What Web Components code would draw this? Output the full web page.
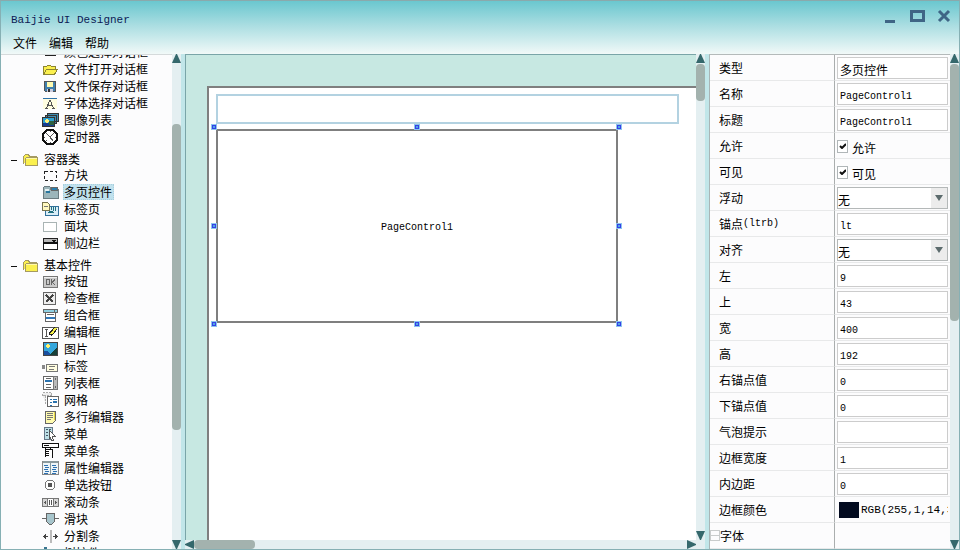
<!DOCTYPE html>
<html lang="zh-CN">
<head>
<meta charset="utf-8">
<title>Baijie UI Designer</title>
<style>
  html, body { height: 100%; margin: 0; }
  body { overflow: hidden; }
</style>
</head>
<body>
<designer-window></designer-window>
<script>
const BASE = `
  * { box-sizing: border-box; }
  button, input, select { font: inherit; color: inherit; margin: 0; border-radius: 0; }
  button { padding: 0; border: 0; background: none; }
`;

function define(name, html, setup) {
  const template = document.createElement('template');
  template.innerHTML = `<style>${BASE}</style>${html}`;
  customElements.define(name, class extends HTMLElement {
    connectedCallback() {
      if (this.shadowRoot) return;
      const root = this.attachShadow({ mode: 'open' });
      root.appendChild(template.content.cloneNode(true));
      if (setup) setup(this, root);
    }
  });
}

/* Toolbox icons, drawn on a 17 x 16 grid. */
const ICONS = {
  folder: '<path fill="#fbf04e" stroke="#a59a62" d="M1.500 12.500v-7l2-2h3l1 2h7v2M4.500 6.500h11v8h-12v-6z"/><path fill="#fff9a8" d="M4 7h11v1H4z"/>',
  color: '<path fill="#555" d="M3 3h11v9H3z"/><path fill="#e8d83c" d="M4 8h3v3H4z"/><path fill="#6ca6c8" d="M8 4h5v4H8z"/><path fill="#222" d="M3 11h11v1H3z"/>',
  open: '<path fill="#fbf04e" stroke="#8b8433" d="M1.500 13.500v-8h3l1-1h3l1 1h4v3M1.500 13.500l3-5h11l-3 5z"/>',
  save: '<path fill="#3f7fae" stroke="#555" d="M2.500 3.500h11v10h-10l-1-1z"/><path fill="#fffbb0" d="M5 4h6v5H5z"/><path fill="#ccd" d="M5 11h6v3H5z"/><path fill="#333" d="M6 11h2v3H6z"/>',
  font: '<path fill="#fffde0" d="M1 3h14v11H1z"/><path fill="#2e72a8" d="M1 3h14v1H1z"/><path fill="none" stroke="#555" d="M3 13.500h3M10 13.500h3M4.500 13L8 5l3.500 8M5.500 10.500h5"/>',
  images: '<path fill="#3f8cb0" stroke="#333" d="M5.500 1.500h11v8h-11zM3.500 3.500h11v8h-11z"/><path fill="#2fa0d0" stroke="#333" d="M.5 5.500h12v9H.5z"/><path fill="#163c90" d="M1 11h11v3H1z"/><path fill="#2b6040" d="M7 9h5v4H7z"/><path fill="#fff27a" d="M4 7h2v4H4zM3 8h4v2H3z"/>',
  timer: '<path fill="#fff" stroke="#111" stroke-width="1.500" d="M5 1h6l4 4v6l-4 4H5l-4-4V5z"/><path fill="none" stroke="#555" d="M4 4l4 4 4-4M8 8l3 4M8 2v1M2 8h1M13 8h1M8 13v1M4 12l1-1"/>',
  frame: '<path fill="none" stroke="#222" stroke-dasharray="3 2" d="M2.500 4.500h12v9h-12z"/>',
  pages: '<path fill="#9cb5ba" stroke="#6b7b80" d="M1.500 14.500v-11l1-1h5l1 1v2h8v9z"/><path fill="#287eae" stroke="#666" d="M9.500 3.500h6v3h-6z"/><path fill="#e5f0f2" d="M3 5h4v2H3z"/><path fill="#27759e" d="M4 7h4v2H4z"/>',
  tabsheet: '<path fill="#d9edf7" stroke="#32719b" d="M3.500 5.500h13v9h-13z"/><path fill="#207080" d="M5 12l2-2h3l2 2zM9 6h1v3H9zM11 6h1v4h-1zM13 6h1v4h-1z"/><path fill="#fff8be" stroke="#77734e" d="M.5 1.500h5l2 2v6h-7z"/><path fill="#777" d="M2 5h4v1H2z"/>',
  panel: '<path fill="#fff" stroke="#a9b4b4" d="M1.500 4.500h13v9h-13z"/>',
  sidebar: '<path fill="#fff" stroke="#222" d="M1.500 3.500h14v11h-14z"/><path fill="#b7b7b7" d="M2 4h13v3H2z"/><path fill="#111" d="M1 7h15v2H1zM10 5h4v1h-4zM11 6h2v1h-2z"/>',
  button: '<path fill="#c9c9c9" stroke="#777" d="M1.500 3.500h14v11h-14z"/><path fill="#eee" d="M2 4h13v1H2z"/><path fill="none" stroke="#666" d="M4.500 6.500h3v5h-3zM9.500 6v6M13 6.500L10 9.500l3 2"/>',
  checkbox: '<path fill="#eee" stroke="#666" d="M1.500 2.500h12v12h-12z"/><path fill="none" stroke="#444" stroke-width="2" d="M4 5l7 7M11 5l-7 7"/>',
  combo: '<path fill="#8fd0e2" stroke="#666" d="M1.500 2.500h14v3h-14z"/><path fill="#fff" stroke="#666" d="M3.500 5.500h10v9h-10z"/><path fill="#666" d="M12 3h1v3h-1zM5 7h7v1H5z"/><path fill="#3278b8" d="M4 10h9v2H4z"/>',
  edit: '<path fill="#fff" stroke="#555" d="M.5 3.500h16v11H.5z"/><path fill="none" stroke="#555" d="M3 5.500h3M3 12.500h3M4.500 6v6"/><path fill="none" stroke="#222" stroke-width="4" d="M8 11l6-7"/><path fill="none" stroke="#f4ef45" stroke-width="2" d="M9 10l5-6"/>',
  picture: '<path fill="#35a7dd" stroke="#444" d="M1.500 1.500h14v13h-14z"/><path fill="#1950a0" d="M2 10h4l3 4H2z"/><path fill="#164039" d="M15 6v8H7z"/><path fill="#fff36e" d="M5 3h2v4H5zM4 4h4v2H4z"/>',
  label: '<path fill="#fffde0" stroke="#777" d="M4.500 6.500h11v7h-11z"/><path fill="#777" d="M7 8h6v1H7zM7 11h5v1H7z"/><path fill="none" stroke="#888" d="M.5 7v4M1 7l2 4M3 7l-2 4"/>',
  list: '<path fill="#fff" stroke="#666" d="M1.500 1.500h10v13h-10z"/><path fill="#bbb" stroke="#777" d="M11.500 1.500h4v13h-4z"/><path fill="#666" d="M13 3h1v2h-1zM13 11h1v2h-1zM4 3h5v1H4zM4 9h5v1H4zM4 12h5v1H4z"/><path fill="#2b72ae" d="M3 5h7v2H3z"/>',
  grid: '<path fill="#eee" stroke="#aaa" stroke-dasharray="2 1" d="M.5.500h9v3H.5zM.5 3.500h3v8"/><path fill="#fff" stroke="#666" d="M5.500 4.500h11v10h-11z"/><path fill="#2b72ae" d="M8 7h2v1H8zM11 7h4v1h-4zM8 10h2v1H8zM11 9h4v2h-4zM8 13h2v1H8z"/>',
  memo: '<path fill="#fffbb0" stroke="#666" d="M3.500 2.500h10v9l-3 3h-7z"/><path fill="#777" d="M5 4h6v1H5zM5 6h6v1H5zM5 8h6v1H5zM5 10h4v1H5z"/><path fill="#e5d646" d="M12 3h1v8h-1z"/>',
  menu: '<path fill="#bde0e6" stroke="#678" d="M2.500 1.500h8v12h-8z"/><path fill="#456" d="M4 3h2v1H4zM4 6h2v1H4zM4 9h2v1H4zM7 3h2v1H7z"/><path fill="#fff" stroke="#555" d="M7.500 4.500l6 6h-3l1 4h-2l-1-3-1 1z"/>',
  menubar: '<path fill="#fff" stroke="#111" d="M.5.500h16v4H.5zM3.500 4.500v9M3.500 6.500h7v8"/><path fill="#111" d="M2 2h5v1H2zM4 8h3v1H4zM4 10h3v1H4zM4 12h3v1H4zM8 5h1v2H8z"/>',
  props: '<path fill="#eef5f8" stroke="#888" d="M.5 1.500h16v13H.5z"/><path fill="#8a999d" d="M1 1h15v2H1zM8 3h1v11H8z"/><path fill="#2d70b0" d="M2 5h4v1H2zM3 7h4v1H3zM2 9h4v1H2zM3 11h4v1H3zM2 13h4v1H2zM10 5h4v1h-4zM11 7h4v1h-4zM10 9h4v1h-4zM11 11h4v1h-4zM10 13h4v1h-4z"/>',
  radio: '<circle cx="8" cy="8" r="5" fill="#fff" stroke="#777"/><path fill="#555" d="M6 6h4v4H6z"/>',
  scroll: '<path fill="#d5d5d5" stroke="#777" d="M.5 4.500h16v8H.5z"/><path fill="#fff" stroke="#777" d="M5.500 4.500h6v8h-6z"/><path fill="#555" d="M2 8h1v1H2zM3 7h1v3H3zM14 8h1v1h-1zM13 7h1v3h-1zM7 6h1v5H7zM9 6h1v5H9z"/>',
  slider: '<path fill="#666" d="M0 7h17v1H0z"/><path fill="#a7c5cc" stroke="#666" d="M4.500 2.500h8v8l-3 3h-2l-3-3z"/>',
  splitter: '<path fill="#bbb" d="M8 2h2v13H8z"/><path fill="#444" d="M1 8h5v1H1zM3 6h1v5H3zM2 7h1v3H2zM11 8h5v1h-5zM13 6h1v5h-1zM14 7h1v3h-1z"/>',
  tree: '<path fill="#39748f" d="M2 2h3v3H2z"/><path fill="#666" d="M3 5h1v8H3zM3 8h5v1H3z"/>'
};

const iconSvg = name =>
  `<svg width="17" height="16" viewBox="0 0 17 16" shape-rendering="crispEdges" aria-hidden="true">${ICONS[name] || ''}</svg>`;

define('scroll-bar', `
  <style>
    :host { display: flex; flex-direction: column; background: #e4eff1; min-width: 9px; min-height: 9px; }
    :host([horizontal]) { flex-direction: row; }
    button { flex: none; width: 9px; height: 9px; display: block; }
    svg { display: block; fill: #35686c; }
    .thumb { background: #a3b2ae; border-radius: 4px; }
    :host([horizontal]) svg { transform: rotate(-90deg); }
  </style>
  <button aria-label="向前滚动"><svg width="9" height="9" viewBox="0 0 9 9"><path d="M4 0h1l4 9H0z"/></svg></button>
  <div class="before"></div><div class="thumb"></div><div class="after"></div>
  <button aria-label="向后滚动"><svg width="9" height="9" viewBox="0 0 9 9"><path d="M0 0h9L5 9H4z"/></svg></button>
`, (el, root) => {
  const parts = el.getAttribute('parts').split(' ');
  ['.before', '.thumb', '.after'].forEach((s, i) => {
    root.querySelector(s).style.flex = parts[i] + ' 1 0';
  });
});

define('window-bar', `
  <style>
    :host { display: block; height: 53px; background: linear-gradient(#6ac7cf, #a9dde1 45%, #f1f9f8); }
    .top { display: flex; height: 30px; align-items: center; padding: 0 7px 0 10px; }
    h1 { flex: 1; margin: 0; padding-top: 7px; font: 11px/16px "Liberation Mono", monospace; color: #0d1a55; }
    .controls { display: flex; gap: 11px; }
    .controls svg { display: block; fill: none; stroke: #3f6585; }
    nav { display: flex; gap: 12px; height: 23px; align-items: center; padding-left: 12px; }
    nav button { line-height: 18px; }
  </style>
  <div class="top">
    <h1>Baijie UI Designer</h1>
    <div class="controls">
      <button aria-label="最小化"><svg width="16" height="16"><path stroke-width="3" d="M3 13.500h10"/></svg></button>
      <button aria-label="最大化"><svg width="16" height="16"><path stroke-width="3" d="M2.500 3.500h12v9h-12z"/></svg></button>
      <button aria-label="关闭"><svg width="16" height="16"><path stroke-width="3" d="M3 3l10 10M13 3L3 13"/></svg></button>
    </div>
  </div>
  <nav><button>文件</button><button>编辑</button><button>帮助</button></nav>
`);

define('tool-item', `
  <style>
    :host { display: block; height: 17px; padding-left: 41px; }
    button { display: flex; gap: 4px; align-items: center; }
    svg { display: block; }
    span { padding: 0 2px 0 1px; line-height: 16px; height: 16px; white-space: nowrap; }
    :host([selected]) span { background: #c0e1ed; outline: 1px dotted #a9cfdd; outline-offset: -1px; }
  </style>
  <button><i></i><span><slot></slot></span></button>
`, (el, root) => {
  root.querySelector('i').innerHTML = iconSvg(el.getAttribute('icon'));
});

define('tool-group', `
  <style>
    :host { display: block; }
    header { display: flex; height: 17px; align-items: center; padding-left: 10px; margin-top: 4px; }
    header button { width: 6px; height: 12px; margin-right: 5px; display: flex; align-items: center; padding-top: 3px; }
    header button::before { content: ""; flex: 1; height: 1px; background: #111; }
    svg { display: block; }
    span { padding-left: 5px; line-height: 16px; }
  </style>
  <header><button aria-label="折叠" aria-expanded="true"></button><i></i><span></span></header>
  <slot></slot>
`, (el, root) => {
  root.querySelector('i').innerHTML = iconSvg('folder');
  root.querySelector('span').textContent = el.getAttribute('label');
});

define('tool-box', `
  <style>
    :host { display: block; overflow: hidden; background: #fcfcfd; border-top: 1px solid #d5dadb; }
    .list { margin-top: -11px; }
  </style>
  <div class="list">
    <tool-item icon="color">颜色选择对话框</tool-item>
    <tool-item icon="open">文件打开对话框</tool-item>
    <tool-item icon="save">文件保存对话框</tool-item>
    <tool-item icon="font">字体选择对话框</tool-item>
    <tool-item icon="images">图像列表</tool-item>
    <tool-item icon="timer">定时器</tool-item>
    <tool-group label="容器类">
      <tool-item icon="frame">方块</tool-item>
      <tool-item icon="pages" selected>多页控件</tool-item>
      <tool-item icon="tabsheet">标签页</tool-item>
      <tool-item icon="panel">面块</tool-item>
      <tool-item icon="sidebar">侧边栏</tool-item>
    </tool-group>
    <tool-group label="基本控件">
      <tool-item icon="button">按钮</tool-item>
      <tool-item icon="checkbox">检查框</tool-item>
      <tool-item icon="combo">组合框</tool-item>
      <tool-item icon="edit">编辑框</tool-item>
      <tool-item icon="picture">图片</tool-item>
      <tool-item icon="label">标签</tool-item>
      <tool-item icon="list">列表框</tool-item>
      <tool-item icon="grid">网格</tool-item>
      <tool-item icon="memo">多行编辑器</tool-item>
      <tool-item icon="menu">菜单</tool-item>
      <tool-item icon="menubar">菜单条</tool-item>
      <tool-item icon="props">属性编辑器</tool-item>
      <tool-item icon="radio">单选按钮</tool-item>
      <tool-item icon="scroll">滚动条</tool-item>
      <tool-item icon="slider">滑块</tool-item>
      <tool-item icon="splitter">分割条</tool-item>
      <tool-item icon="tree">树控件</tool-item>
    </tool-group>
  </div>
`);

define('selected-control', `
  <style>
    :host { display: flex; align-items: center; justify-content: center; box-sizing: border-box; padding-top: 4px;
      border: 2px solid #7f7f7f; font: 10px/14px "Liberation Mono", monospace; }
    i { position: absolute; width: 6px; height: 6px; background: #4fa9e0; border: 1px solid #8cc4ee;
      box-shadow: inset 0 0 0 1px #3640e8; }
    .t { top: -7px; } .b { bottom: -6px; } .l { left: -7px; } .r { right: -6px; }
    .m { top: calc(50% - 3px); } .c { left: calc(50% - 3px); }
  </style>
  <slot></slot>
  <i class="t l"></i><i class="t c"></i><i class="t r"></i>
  <i class="m l"></i><i class="m r"></i>
  <i class="b l"></i><i class="b c"></i><i class="b r"></i>
`);

define('design-canvas', `
  <style>
    :host { display: flex; overflow: hidden; padding: 31px 0 0 21px; background: #c7e8e2;
      border: solid #7aa5a8; border-width: 1px 0 0 1px; }
    .sheet { flex: 1; position: relative; background: #fff; border: solid #7f7f7f; border-width: 2px 0 0 2px; }
    input { position: absolute; left: 7px; top: 6px; width: 463px; height: 30px; border: 2px solid #b3d2e1; background: #fff; outline: 0; }
    selected-control { position: absolute; left: 7px; top: 41px; width: 402px; height: 194px; }
  </style>
  <div class="sheet">
    <input aria-label="编辑框">
    <selected-control>PageControl1</selected-control>
  </div>
`);

define('prop-row', `
  <style>
    :host { display: grid; grid-template-columns: 125px minmax(0, 1fr); height: 26px; }
    .name { display: flex; align-items: center; padding-left: 9px; border-right: 1px solid #aaaeae; border-bottom: 1px solid #e8e9ea; white-space: nowrap; }
    .name small, .latin { font: 10px/14px "Liberation Mono", monospace; }
    .expander { width: 10px; height: 11px; margin-left: -9px; border: 1px solid #c9cccc;
      background: linear-gradient(#c9cccc, #c9cccc) center / 100% 1px no-repeat; }
    .value { display: flex; align-items: center; padding: 2px 2px 1px 2px; border-bottom: 1px solid #e8e9ea; overflow: hidden; }
    .field { width: 100%; height: 22px; border: 1px solid #ccc; background: #fff; outline: 0; }
    input.field { padding: 3px 2px 0; }
    input.latin { padding-top: 5px; }
    .combo { display: flex; border-color: #b4b8b8; position: relative; }
    select { appearance: none; flex: 1; border: 0; outline: 0; background: linear-gradient(#ececec, #ececec) right / 16px 100% no-repeat; padding: 4px 18px 0 0; }
    .combo svg { position: absolute; right: 4px; top: 7px; pointer-events: none; }
    .check { display: flex; align-items: center; gap: 4px; line-height: 16px; }
    .check input { appearance: none; width: 11px; height: 13px; border: 1px solid #b0b6b8; background: #fff; }
    .check .box { display: flex; position: relative; }
    .check svg { position: absolute; left: 2px; top: 3px; pointer-events: none; }
    .check .text { padding-top: 4px; }
    .color { display: flex; align-items: center; gap: 2px; padding-left: 2px; white-space: nowrap;
      width: 100%; overflow: hidden; font: 11px/16px "Liberation Mono", monospace; }
    .swatch { flex: none; width: 20px; height: 16px; background: #020a1f; }
  </style>
  <label class="name" for="field"></label>
  <div class="value"></div>
`, (el, root) => {
  const name = el.getAttribute('name');
  const type = el.getAttribute('type') || 'text';
  const value = el.getAttribute('value') || '';
  const label = root.querySelector('.name');
  const cell = root.querySelector('.value');
  label.innerHTML = name.replace(/(\([a-z]+\))/, '<small>$1</small>');
  if (type === 'text') {
    const latin = /^[\x00-\x7f]*$/.test(value) ? ' latin' : '';
    cell.innerHTML = `<input id="field" class="field${latin}" value="${value}">`;
  } else if (type === 'select') {
    cell.innerHTML = `<div class="field combo"><select id="field"><option>${value}</option></select>
      <svg width="8" height="6" fill="#5c6b6d"><path d="M0 0h8L4 6z"/></svg></div>`;
  } else if (type === 'check') {
    cell.innerHTML = `<label class="check"><span class="box"><input id="field" type="checkbox" checked>
      <svg width="7" height="6" fill="none" stroke="#111" stroke-width="2"><path d="M1 3l2 2 4-4"/></svg></span><span class="text">${value}</span></label>`;
  } else if (type === 'color') {
    cell.innerHTML = `<button id="field" class="color"><span class="swatch"></span>${value}</button>`;
  } else if (type === 'group') {
    label.insertAdjacentHTML('afterbegin', '<button id="field" class="expander" aria-label="展开"></button>');
  }
});

define('property-panel', `
  <style>
    :host { display: block; overflow: hidden; background: #fcfcfd; border-left: 1px solid #a9b5b6;
      border-top: 1px solid #b4baba; }
    prop-row:first-of-type { height: 26px; }
  </style>
  <prop-row name="类型" value="多页控件"></prop-row>
  <prop-row name="名称" value="PageControl1"></prop-row>
  <prop-row name="标题" value="PageControl1"></prop-row>
  <prop-row name="允许" type="check" value="允许"></prop-row>
  <prop-row name="可见" type="check" value="可见"></prop-row>
  <prop-row name="浮动" type="select" value="无"></prop-row>
  <prop-row name="锚点(ltrb)" value="lt"></prop-row>
  <prop-row name="对齐" type="select" value="无"></prop-row>
  <prop-row name="左" value="9"></prop-row>
  <prop-row name="上" value="43"></prop-row>
  <prop-row name="宽" value="400"></prop-row>
  <prop-row name="高" value="192"></prop-row>
  <prop-row name="右锚点值" value="0"></prop-row>
  <prop-row name="下锚点值" value="0"></prop-row>
  <prop-row name="气泡提示"></prop-row>
  <prop-row name="边框宽度" value="1"></prop-row>
  <prop-row name="内边距" value="0"></prop-row>
  <prop-row name="边框颜色" type="color" value="RGB(255,1,14,31)"></prop-row>
  <prop-row name="字体" type="group"></prop-row>
`);

define('designer-window', `
  <style>
    :host { display: flex; flex-direction: column; box-sizing: border-box; height: 100vh;
      border: 1px solid #86b0b4; border-top-color: #8aa9ac; background: #e4eff1; color: #000;
      font: 12px/16px "Noto Sans CJK SC", sans-serif; }
    main { flex: 1; min-height: 0; display: grid;
      grid-template: minmax(0, 1fr) / 171px 9px 4px minmax(0, 1fr) 4px 241px 9px; }
    main > * { min-height: 0; }
    .splitter { background: #c1e6e9; }
    .center { display: grid; grid-template: minmax(0, 1fr) 9px / minmax(0, 1fr) 9px; }
  </style>
  <window-bar></window-bar>
  <main>
    <tool-box></tool-box>
    <scroll-bar parts="61 307 110"></scroll-bar>
    <div class="splitter"></div>
    <div class="center">
      <design-canvas></design-canvas>
      <scroll-bar parts="1 37 430"></scroll-bar>
      <scroll-bar horizontal parts="0 61 431"></scroll-bar>
    </div>
    <div class="splitter"></div>
    <property-panel></property-panel>
    <scroll-bar parts="1 257 219"></scroll-bar>
  </main>
`);
</script>
</body>
</html>
